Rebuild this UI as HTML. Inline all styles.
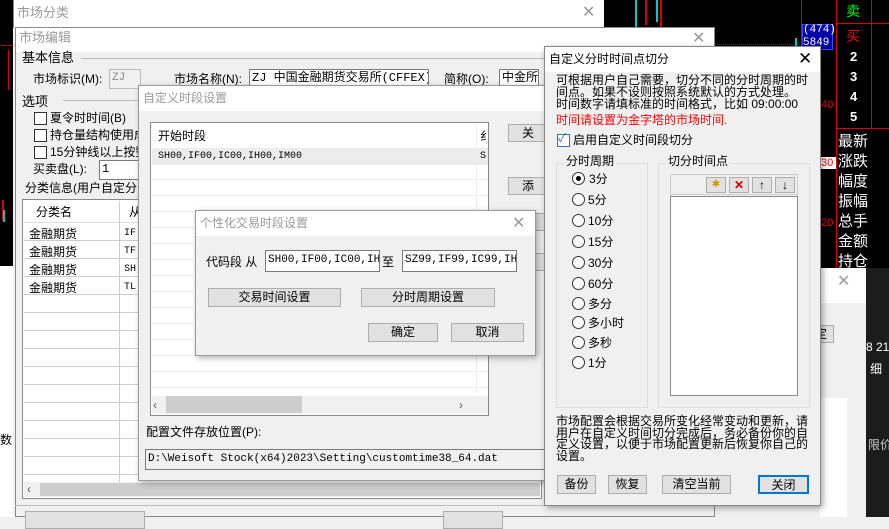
<!DOCTYPE html>
<html><head><meta charset="utf-8"><style>
*{box-sizing:border-box;margin:0;padding:0}
body{width:889px;height:517px;overflow:hidden;position:relative;background:#f0f0f0;font-family:"Liberation Sans","Noto Sans CJK SC",sans-serif;font-size:12px;color:#000}
.a{position:absolute}
.t{position:absolute;white-space:nowrap;line-height:14px;font-size:12px}
.btn{position:absolute;background:#e1e1e1;border:1px solid #adadad;text-align:center;font-size:12px;line-height:17px}
.inp{position:absolute;background:#fff;border:1px solid #7a7a7a;font-family:"Liberation Mono","Noto Sans CJK SC",monospace;font-size:11px;line-height:17px;padding-left:2px;white-space:nowrap;overflow:hidden}
.x{position:absolute;font-size:16px;color:#999;line-height:16px}
.cb{position:absolute;width:13px;height:13px;border:1px solid #333;background:#fff}
.rd{position:absolute;width:13px;height:13px;border:1px solid #333;border-radius:50%;background:#fff}
.w{color:#fff}
</style></head><body>
<!-- black background chart areas -->
<div class="a" style="left:0;top:0;width:13px;height:266px;background:#000"></div>
<div class="a" style="left:1px;top:45px;width:12px;height:1px;border-top:1px dotted #c00"></div>
<div class="a" style="left:8px;top:50px;width:1px;height:40px;background:#d00"></div>
<div class="a" style="left:2px;top:200px;width:2px;height:20px;background:#d00"></div>
<div class="a" style="left:3px;top:210px;width:2px;height:12px;background:#0cc"></div>
<div class="a" style="left:0;top:266px;width:13px;height:251px;background:#fff"></div>
<div class="t" style="left:0;top:433px;">数</div>

<div class="a" style="left:604px;top:0;width:285px;height:268px;background:#000"></div>
<div class="a" style="left:635px;top:0;width:2px;height:30px;background:#0cc"></div>
<div class="a" style="left:645px;top:0;width:2px;height:25px;background:#d00"></div>
<div class="a" style="left:656px;top:0;width:2px;height:22px;background:#0cc"></div>
<div class="a" style="left:660px;top:0;width:2px;height:28px;background:#d00"></div>
<div class="a" style="left:714px;top:44px;width:88px;border-top:1px dotted #c00"></div>
<div class="a" style="left:795px;top:38px;width:2px;height:8px;background:#0cc"></div>
<div class="a" style="left:801px;top:0;width:1px;height:268px;background:#d00"></div>
<div class="a" style="left:836px;top:0;width:1px;height:268px;background:#d00"></div>
<div class="a" style="left:871px;top:0;width:1px;height:128px;background:#d00"></div>
<div class="a" style="left:836px;top:23px;width:53px;height:1px;background:#d00"></div>
<div class="a" style="left:836px;top:128px;width:53px;height:1px;background:#d00"></div>
<div class="a" style="left:802px;top:24px;width:31px;height:26px;background:#0000a8;border:1px solid #44f"></div>
<div class="t w" style="left:803px;top:23px;font-size:11px;font-family:'Liberation Mono',monospace">(474)</div>
<div class="t w" style="left:803px;top:36px;font-size:11px;font-family:'Liberation Mono',monospace">5849</div>
<div class="t" style="left:846px;top:4px;color:#0f0;font-size:14px">卖</div>
<div class="t" style="left:846px;top:29px;color:#f00;font-size:14px">买</div>
<div class="t w" style="left:850px;top:50px;font-size:13px;font-weight:bold">2</div>
<div class="t w" style="left:850px;top:70px;font-size:13px;font-weight:bold">3</div>
<div class="t w" style="left:850px;top:90px;font-size:13px;font-weight:bold">4</div>
<div class="t w" style="left:850px;top:110px;font-size:13px;font-weight:bold">5</div>
<div class="t" style="left:821px;top:98px;color:#f00;font-size:11px">40</div>
<div class="a" style="left:820px;top:157px;width:16px;height:12px;background:#fff"></div>
<div class="t" style="left:821px;top:156px;color:#f00;font-size:11px">30</div>
<div class="t" style="left:821px;top:216px;color:#f00;font-size:11px">20</div>
<div class="t w" style="left:838px;top:132px;font-size:15px;line-height:20px">最新<br>涨跌<br>幅度<br>振幅<br>总手<br>金额<br>持仓</div>
<!-- right small window bottom -->
<div class="a" style="left:820px;top:268px;width:46px;height:249px;background:#f0f0f0"></div>
<div class="a" style="left:820px;top:268px;width:46px;height:35px;background:#fff"></div>
<div class="x" style="left:837px;top:274px">✕</div>
<div class="a" style="left:866px;top:268px;width:23px;height:249px;background:#1c1c1c"></div>
<div class="t w" style="left:866px;top:340px;font-size:12px">8 21</div>
<div class="t w" style="left:870px;top:362px">细</div>
<div class="t" style="left:868px;top:438px;color:#ccc">限价</div>
<div class="btn" style="left:808px;top:325px;width:26px;height:18px">定</div>
<div class="a" style="left:820px;top:398px;width:27px;height:119px;background:#fff"></div>

<!-- 市场分类 window -->
<div class="a" style="left:13px;top:0;width:591px;height:28px;background:#fff;border-left:1px solid #888"></div>
<div class="t" style="left:17px;top:6px;color:#999;font-size:13px">市场分类</div>
<div class="x" style="left:582px;top:5px">✕</div>

<!-- 市场编辑 window -->
<div class="a" style="left:15px;top:27px;width:700px;height:490px;background:#f0f0f0;border:1px solid #888"></div>
<div class="a" style="left:16px;top:28px;width:698px;height:24px;background:#fff"></div>
<div class="t" style="left:19px;top:31px;color:#999;font-size:13px">市场编辑</div>
<div class="x" style="left:692px;top:31px">✕</div>
<div class="t" style="left:22px;top:51px;font-size:13px">基本信息</div>
<div class="a" style="left:81px;top:58px;width:630px;height:1px;background:#bbb"></div>
<div class="t" style="left:33px;top:72px">市场标识(M):</div>
<div class="inp" style="left:109px;top:69px;width:32px;height:20px;background:#f0f0f0;border-color:#bbb;color:#888">ZJ</div>
<div class="t" style="left:174px;top:72px">市场名称(N):</div>
<div class="inp" style="left:249px;top:69px;width:180px;height:20px;font-size:12px">ZJ 中国金融期货交易所(CFFEX)</div>
<div class="t" style="left:444px;top:72px">简称(O):</div>
<div class="inp" style="left:499px;top:69px;width:40px;height:20px;font-size:12px">中金所</div>
<div class="t" style="left:22px;top:95px;font-size:13px">选项</div>
<div class="a" style="left:63px;top:100px;width:80px;height:1px;background:#bbb"></div>
<div class="cb" style="left:34px;top:112px"></div><div class="t" style="left:50px;top:111px">夏令时时间(B)</div>
<div class="cb" style="left:34px;top:129px"></div><div class="t" style="left:50px;top:128px">持仓量结构使用成</div>
<div class="cb" style="left:34px;top:146px"></div><div class="t" style="left:50px;top:145px">15分钟线以上按整</div>
<div class="t" style="left:33px;top:162px">买卖盘(L):</div>
<div class="inp" style="left:99px;top:160px;width:40px;height:20px;font-size:12px">1</div>
<div class="t" style="left:25px;top:181px">分类信息(用户自定分</div>
<div class="a" style="left:22px;top:199px;width:520px;height:300px;background:#fff;border:1px solid #888"></div>
<div class="a" style="left:24px;top:201px;width:116px;height:22px;background:#fff;border-bottom:1px solid #ddd"></div>
<div class="t" style="left:36px;top:205px">分类名</div>
<div class="t" style="left:129px;top:205px">从</div>
<div class="a" style="left:119px;top:201px;width:1px;height:280px;background:#ccc"></div>
<div class="a" style="left:24px;top:223px;width:120px;height:260px;background:repeating-linear-gradient(#fff 0 17px,#ccc 17px 18px)"></div>
<div class="a" style="left:119px;top:223px;width:1px;height:260px;background:#ccc"></div>
<div class="t" style="left:29px;top:225px;line-height:18px">金融期货<br>金融期货<br>金融期货<br>金融期货</div>
<div class="t" style="left:124px;top:225px;line-height:18px;font-family:'Liberation Mono',monospace;font-size:10px">IF<br>TF<br>SH<br>TL</div>
<div class="a" style="left:24px;top:482px;width:516px;height:15px;background:#f0f0f0"></div>
<div class="a" style="left:40px;top:483px;width:500px;height:13px;background:#cdcdcd"></div>
<div class="t" style="left:27px;top:482px;color:#555">‹</div>
<div class="a" style="left:15px;top:505px;width:700px;height:1px;background:#bbb"></div>
<div class="btn" style="left:25px;top:511px;width:120px;height:18px"></div>
<div class="btn" style="left:443px;top:511px;width:60px;height:18px"></div>

<!-- 自定义时段设置 -->
<div class="a" style="left:138px;top:85px;width:410px;height:396px;background:#f0f0f0;border:1px solid #999;box-shadow:2px 2px 6px rgba(0,0,0,.3)"></div>
<div class="a" style="left:139px;top:86px;width:408px;height:25px;background:#fff"></div>
<div class="t" style="left:143px;top:91px;color:#999;font-size:12px">自定义时段设置</div>
<div class="a" style="left:150px;top:122px;width:339px;height:294px;background:#fff;border:1px solid #888"></div>
<div class="a" style="left:152px;top:148px;width:336px;height:245px;background:repeating-linear-gradient(#fff 0 15px,#eee 15px 16px)"></div>
<div class="a" style="left:152px;top:148px;width:336px;height:17px;background:#ececec"></div>
<div class="a" style="left:476px;top:124px;width:1px;height:270px;background:#eee"></div>
<div class="t" style="left:158px;top:129px">开始时段</div>
<div class="t" style="left:480px;top:129px">纟</div>
<div class="t" style="left:158px;top:150px;font-family:'Liberation Mono',monospace;font-size:10px">SH00,IF00,IC00,IH00,IM00</div>
<div class="t" style="left:480px;top:150px;font-family:'Liberation Mono',monospace;font-size:10px">S</div>
<div class="a" style="left:152px;top:396px;width:336px;height:18px;background:#f0f0f0"></div>
<div class="a" style="left:166px;top:396px;width:136px;height:17px;background:#cdcdcd"></div>
<div class="t" style="left:153px;top:398px;color:#555">‹</div>
<div class="t" style="left:459px;top:398px;color:#555">›</div>
<div class="btn" style="left:508px;top:124px;width:40px;height:18px">关</div>
<div class="btn" style="left:508px;top:177px;width:40px;height:18px">添</div>
<div class="btn" style="left:508px;top:213px;width:40px;height:18px">修</div>
<div class="btn" style="left:508px;top:253px;width:40px;height:18px">删</div>
<div class="t" style="left:146px;top:425px">配置文件存放位置(P):</div>
<div class="inp" style="left:145px;top:449px;width:403px;height:21px;background:#f0f0f0;line-height:18px;font-size:11px">D:\Weisoft Stock(x64)2023\Setting\customtime38_64.dat</div>

<!-- 个性化交易时段设置 -->
<div class="a" style="left:195px;top:210px;width:341px;height:146px;background:#f0f0f0;border:1px solid #999;box-shadow:2px 2px 6px rgba(0,0,0,.3)"></div>
<div class="a" style="left:196px;top:211px;width:339px;height:25px;background:#fff"></div>
<div class="t" style="left:200px;top:216px;color:#999">个性化交易时段设置</div>
<div class="x" style="left:512px;top:216px">✕</div>
<div class="t" style="left:206px;top:255px">代码段 从</div>
<div class="inp" style="left:265px;top:250px;width:115px;height:22px;line-height:19px">SH00,IF00,IC00,IH0</div>
<div class="t" style="left:382px;top:255px">至</div>
<div class="inp" style="left:402px;top:250px;width:115px;height:22px;line-height:19px">SZ99,IF99,IC99,IH9</div>
<div class="btn" style="left:208px;top:288px;width:133px;height:19px">交易时间设置</div>
<div class="btn" style="left:361px;top:288px;width:134px;height:19px">分时周期设置</div>
<div class="btn" style="left:368px;top:323px;width:70px;height:19px">确定</div>
<div class="btn" style="left:451px;top:323px;width:73px;height:19px">取消</div>

<!-- 自定义分时时间点切分 -->
<div class="a" style="left:544px;top:46px;width:277px;height:460px;background:#f0f0f0;border:1px solid #888;box-shadow:2px 2px 6px rgba(0,0,0,.35)"></div>
<div class="a" style="left:545px;top:47px;width:275px;height:25px;background:#fff"></div>
<div class="t" style="left:549px;top:52px;font-size:12px">自定义分时时间点切分</div>
<div class="a" style="left:798px;top:50px;font-size:17px;line-height:18px;color:#000">✕</div>
<div class="t" style="left:556px;top:74px;line-height:12px">可根据用户自己需要，切分不同的分时周期的时<br>间点。如果不设则按照系统默认的方式处理。<br>时间数字请填标准的时间格式，比如 09:00:00</div>
<div class="t" style="left:556px;top:113px;color:#f00">时间请设置为金字塔的市场时间.</div>
<div class="cb" style="left:557px;top:134px;border-color:#2277cc"></div>
<div class="t" style="left:558px;top:131px;color:#2277cc;font-size:12px">✓</div>
<div class="t" style="left:573px;top:133px">启用自定义时间段切分</div>
<div class="a" style="left:556px;top:163px;width:92px;height:245px;border:1px solid #ddd"></div>
<div class="t" style="left:564px;top:154px;background:#f0f0f0;padding:0 2px">分时周期</div>
<div class="a" style="left:658px;top:163px;width:152px;height:245px;border:1px solid #ddd"></div>
<div class="t" style="left:666px;top:154px;background:#f0f0f0;padding:0 2px">切分时间点</div>
<div class="rd" style="left:572px;top:172px"></div><div class="a" style="left:576px;top:176px;width:5px;height:5px;border-radius:50%;background:#000"></div>
<div class="t" style="left:589px;top:172px">3分</div>
<div class="rd" style="left:572px;top:193px"></div><div class="t" style="left:588px;top:193px">5分</div>
<div class="rd" style="left:572px;top:214px"></div><div class="t" style="left:588px;top:214px">10分</div>
<div class="rd" style="left:572px;top:235px"></div><div class="t" style="left:588px;top:235px">15分</div>
<div class="rd" style="left:572px;top:256px"></div><div class="t" style="left:588px;top:256px">30分</div>
<div class="rd" style="left:572px;top:277px"></div><div class="t" style="left:588px;top:277px">60分</div>
<div class="rd" style="left:572px;top:297px"></div><div class="t" style="left:588px;top:297px">多分</div>
<div class="rd" style="left:572px;top:316px"></div><div class="t" style="left:588px;top:316px">多小时</div>
<div class="rd" style="left:572px;top:336px"></div><div class="t" style="left:588px;top:336px">多秒</div>
<div class="rd" style="left:572px;top:356px"></div><div class="t" style="left:588px;top:356px">1分</div>
<div class="a" style="left:670px;top:174px;width:128px;height:21px;background:#f0f0f0;border:1px solid #ccc"></div>
<div class="btn" style="left:706px;top:177px;width:20px;height:16px;font-size:10px;line-height:14px;color:#c90">✱</div>
<div class="btn" style="left:729px;top:177px;width:20px;height:16px;color:#d00;font-weight:bold;line-height:14px">✕</div>
<div class="btn" style="left:752px;top:177px;width:20px;height:16px;line-height:14px">↑</div>
<div class="btn" style="left:775px;top:177px;width:20px;height:16px;line-height:14px">↓</div>
<div class="a" style="left:670px;top:196px;width:128px;height:200px;background:#fff;border:1px solid #888"></div>
<div class="t" style="left:556px;top:416px;line-height:11.5px">市场配置会根据交易所变化经常变动和更新，请<br>用户在自定义时间切分完成后，务必备份你的自<br>定义设置，以便于市场配置更新后恢复你自己的<br>设置。</div>
<div class="btn" style="left:557px;top:475px;width:39px;height:19px">备份</div>
<div class="btn" style="left:608px;top:475px;width:39px;height:19px">恢复</div>
<div class="btn" style="left:662px;top:475px;width:69px;height:19px">清空当前</div>
<div class="btn" style="left:758px;top:475px;width:51px;height:19px;border:2px solid #0078d7">关闭</div>
</body></html>
